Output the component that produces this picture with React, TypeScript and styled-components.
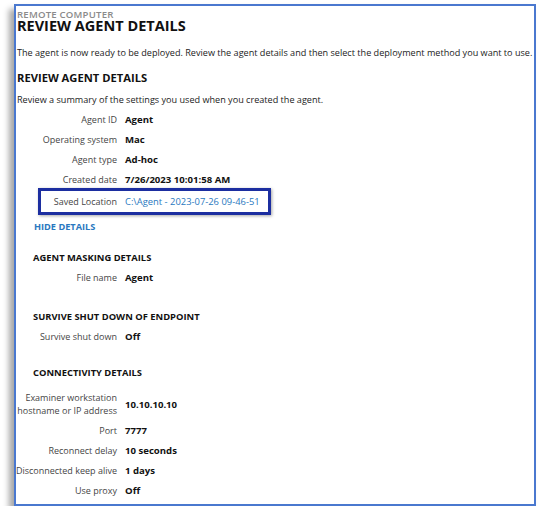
import React from 'react'
import styled, { createGlobalStyle } from 'styled-components'

const GlobalStyle = createGlobalStyle`
    body {
        margin: 0;
        background: #ffffff;
        font-family: 'Open Sans', 'Noto Sans', sans-serif;
    }
`

const Frame = styled.div`
    box-sizing: border-box;
    width: 522px;
    height: 502px;
    margin: 4px 0 0 14px;
    border: 2px solid #4a78cf;
    box-shadow: -5px 5px 6px rgba(0, 0, 0, 0.35);
    background: #fff;
    padding: 4px 0 0 1px;
    overflow: hidden;
    color: #1a1a1a;
`

const Kicker = styled.div`
    font-size: 9.6px;
    line-height: 10px;
    letter-spacing: 0.2px;
    color: #8a8a8a;
    font-weight: 600;
`

const Title = styled.h1`
    margin: 0;
    font-size: 14.5px;
    line-height: 12px;
    font-weight: 700;
    color: #111;
`

const Text = styled.p<{ $top: number }>`
    margin: ${(p) => p.$top}px 0 0;
    font-size: 9.1px;
    line-height: 13px;
    color: #222;
    white-space: nowrap;
`

const SectionTitle = styled.h2<{ $top: number; $indent?: boolean }>`
    margin: ${(p) => p.$top}px 0 0 ${(p) => (p.$indent ? 16 : 0)}px;
    font-size: ${(p) => (p.$indent ? 9.4 : 11.2)}px;
    line-height: 14px;
    font-weight: 700;
    color: #111;
`

const Rows = styled.div<{ $top: number }>`
    margin-top: ${(p) => p.$top}px;
    display: grid;
    grid-template-columns: 100px auto;
    column-gap: 8px;
    row-gap: 7px;
    justify-content: start;
    align-items: center;
`

const Label = styled.div<{ $width?: number }>`
    width: ${(p) => p.$width ?? 100}px;
    text-align: right;
    font-size: 9px;
    line-height: 13px;
    color: #454545;
    white-space: nowrap;
    direction: rtl;
    & > span {
        direction: ltr;
        unicode-bidi: isolate;
    }
`

const Value = styled.div<{ $link?: boolean }>`
    font-size: ${(p) => (p.$link ? 9.4 : 9.6)}px;
    line-height: 13px;
    font-weight: ${(p) => (p.$link ? 400 : 700)};
    color: ${(p) => (p.$link ? '#2a78c0' : '#111')};
    white-space: nowrap;
`

const Highlight = styled.div`
    grid-column: 1 / 3;
    display: flex;
    align-items: center;
    gap: 8px;
    width: fit-content;
    margin: -5px 0 -5px 21px;
    padding: 4px 8px 4px 0;
    border: 3px solid #1c2ea0;
    box-shadow: 1px 1px 3px rgba(0, 0, 0, 0.35);
`

const HideLink = styled.a`
    display: block;
    margin: 10px 0 0 17px;
    font-size: 9.2px;
    line-height: 14px;
    font-weight: 700;
    color: #2a78c0;
    text-decoration: none;
`

type Row = [React.ReactNode, string]

const summary: Row[] = [
    ['Agent ID', 'Agent'],
    ['Operating system', 'Mac'],
    ['Agent type', 'Ad-hoc'],
    ['Created date', '7/26/2023 10:01:58 AM'],
]

const connectivity: Row[] = [
    [
        <>
            Examiner workstation
            <br />
            hostname or IP address
        </>,
        '10.10.10.10',
    ],
    ['Port', '7777'],
    ['Reconnect delay', '10 seconds'],
    ['Disconnected keep alive', '1 days'],
    ['Use proxy', 'Off'],
]

function renderRows(rows: Row[]) {
    return rows.map(([label, value], i) => (
        <React.Fragment key={i}>
            <Label>
                <span>{label}</span>
            </Label>
            <Value>{value}</Value>
        </React.Fragment>
    ))
}

export default function App() {
    return (
        <>
            <GlobalStyle />
            <Frame>
                <Kicker>REMOTE COMPUTER</Kicker>
                <Title>REVIEW AGENT DETAILS</Title>
                <Text $top={14}>
                    The agent is now ready to be deployed. Review the agent details and then select the deployment
                    method you want to use.
                </Text>
                <SectionTitle $top={12}>REVIEW AGENT DETAILS</SectionTitle>
                <Text $top={8}>Review a summary of the settings you used when you created the agent.</Text>
                <Rows $top={7}>
                    {renderRows(summary)}
                    <Highlight>
                        <Label $width={76}>
                            <span>Saved Location</span>
                        </Label>
                        <Value $link>C:\Agent - 2023-07-26 09-46-51</Value>
                    </Highlight>
                </Rows>
                <HideLink href="#">HIDE DETAILS</HideLink>

                <SectionTitle $top={17} $indent>
                    AGENT MASKING DETAILS
                </SectionTitle>
                <Rows $top={6}>{renderRows([['File name', 'Agent']])}</Rows>

                <SectionTitle $top={26} $indent>
                    SURVIVE SHUT DOWN OF ENDPOINT
                </SectionTitle>
                <Rows $top={6}>{renderRows([['Survive shut down', 'Off']])}</Rows>

                <SectionTitle $top={23} $indent>
                    CONNECTIVITY DETAILS
                </SectionTitle>
                <Rows $top={11}>{renderRows(connectivity)}</Rows>
            </Frame>
        </>
    )
}
